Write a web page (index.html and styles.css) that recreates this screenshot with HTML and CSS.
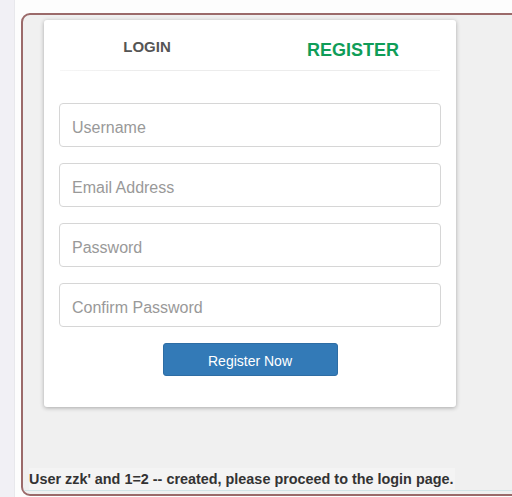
FILE: index.html
```html
<!DOCTYPE html>
<html lang="en">
<head>
  <meta charset="UTF-8" />
  <title>Register</title>
  <link rel="stylesheet" href="styles.css">
</head>
<body>
  <div class="page">
    <div class="side-strip"></div>
    <div class="main">
      <div class="frame">
        <div class="card">
          <div class="tabs">
            <a class="tab" href="#">LOGIN</a>
            <a class="tab active" href="#">REGISTER</a>
          </div>
          <form class="reg-form">
            <input type="text" placeholder="Username" />
            <input type="email" placeholder="Email Address" />
            <input type="password" placeholder="Password" />
            <input type="password" placeholder="Confirm Password" />
            <button type="submit">Register Now</button>
          </form>
        </div>
        <div class="message">
          <span>User zzk' and 1=2 -- created, please proceed to the login page.</span>
        </div>
      </div>
    </div>
  </div>
</body>
</html>
```

FILE: styles.css
```css
html, body {
  margin: 0;
  height: 100%;
  overflow: hidden;
}

body {
  background: #fdfdfd;
  font-family: 'Liberation Sans', Arial, sans-serif;
}

.page {
  display: flex;
  height: 100%;
}

.side-strip {
  width: 14px;
  flex: none;
  background: #f1f0f5;
  border-right: 1px solid #e8e8ec;
}

.main {
  flex: none;
  padding: 13px 0 0 6px;
}

.frame {
  width: 520px;
  height: 479px;
  border: 2px solid #9b6a6a;
  border-radius: 9px 0 0 9px;
  background: #f0f0f0;
  display: flex;
  flex-direction: column;
  overflow: hidden;
}

.card {
  width: 412px;
  height: 387px;
  margin: 5px 0 0 21px;
  background: #fff;
  border-radius: 3px;
  box-shadow: 0 1px 4px rgba(0, 0, 0, 0.3);
}

.tabs {
  display: flex;
  height: 51px;
  position: relative;
}

.tabs::after {
  content: "";
  position: absolute;
  left: 16px;
  right: 16px;
  bottom: 0;
  height: 1px;
  background: linear-gradient(to right, #f6f6f6, #ececec 20%, #ececec 80%, #f6f6f6);
}

.tab {
  flex: 1;
  text-align: center;
  text-decoration: none;
  font-weight: bold;
  font-size: 15px;
  color: #555;
  padding-top: 18px;
}

.tab.active {
  font-size: 18px;
  color: #0f9d58;
  padding-top: 20px;
}

.reg-form {
  display: flex;
  flex-direction: column;
  gap: 16px;
  padding: 32px 15px 0;
}

.reg-form input {
  height: 44px;
  box-sizing: border-box;
  border: 1px solid #d6d6d6;
  border-radius: 4px;
  padding: 5px 12px 0;
  font-family: inherit;
  font-size: 16px;
  color: #555;
}

.reg-form input::placeholder {
  color: #999;
}

.reg-form button {
  align-self: center;
  width: 175px;
  height: 33px;
  padding-top: 4px;
  background: #337ab7;
  color: #fff;
  border: 1px solid #2e6da4;
  border-radius: 3px;
  font-family: inherit;
  font-size: 14px;
}

.message {
  margin-top: auto;
  margin-bottom: 3px;
  padding-left: 6px;
  border-bottom: 1px solid #d2e3e6;
}

.message span {
  display: inline-block;
  padding: 3px 2px 3px 0;
  font-weight: bold;
  font-size: 14.4px;
  color: #333;
  background: #f4f4f4;
}
```
